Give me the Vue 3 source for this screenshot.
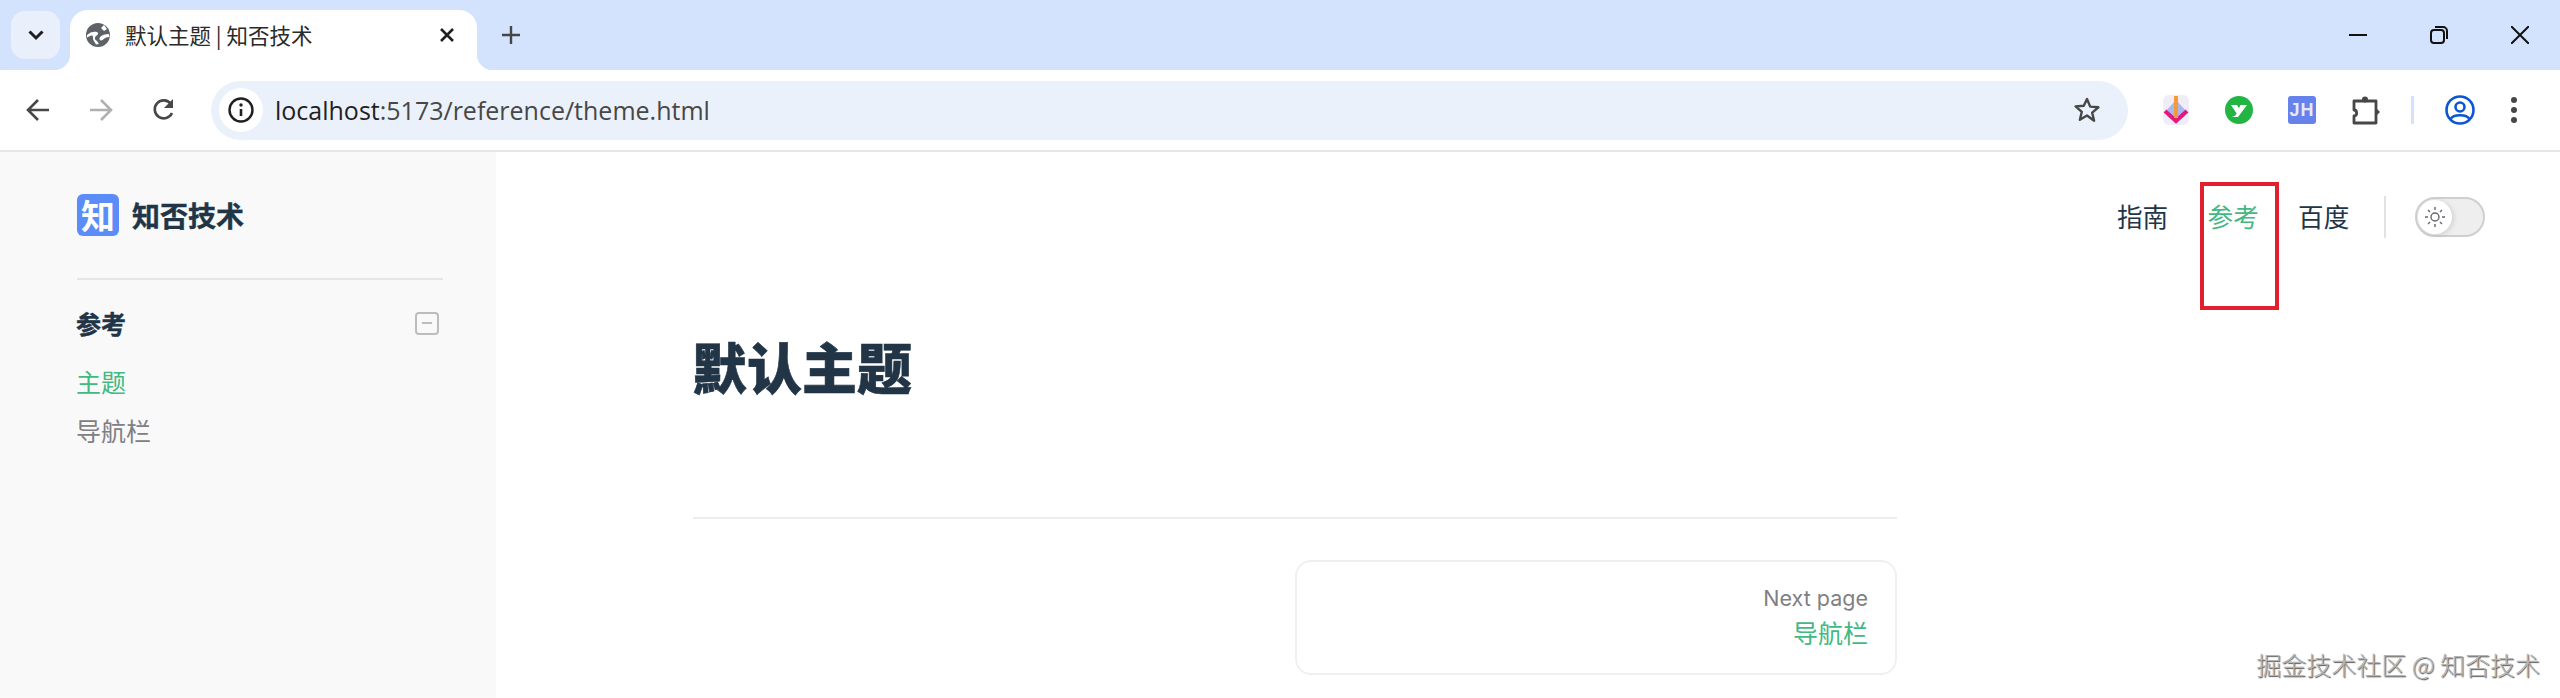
<template>
  <div class="ventana">
    <!-- barra de pestañas -->
    <div class="tabstrip">
      <button class="tab-search">
        <svg width="20" height="20" viewBox="0 0 20 20"><path d="M3.5 6.5 10 13l6.5-6.5" fill="none" stroke="#1f1f1f" stroke-width="3" /></svg>
      </button>
      <div class="tab">
        <svg class="tab-globe" width="24" height="24" viewBox="0 0 24 24">
          <circle cx="12" cy="12" r="12" fill="#5f6368" />
          <path d="M1 12c3-3 7-4 10-3 2 1 1 3-1 4-2 2-1 4 1 5l2 3-3 .5c-1-2-3-4-3-6 0-2 0-3-1-3-2 0-3 1-5 2z" fill="#fff" />
          <path d="M14 14c2-2 5-3 9-3l.5 3c-3 0-5 1-7 3-2 1-4 0-2.500-3z" fill="#fff" />
          <path d="M15 5l3-3 3 4-3 2z" fill="#fff" />
        </svg>
        <span class="tab-title">默认主题 | 知否技术</span>
        <svg class="tab-x" width="16" height="16" viewBox="0 0 16 16"><path d="M2 2l12 12M14 2 2 14" stroke="#1f1f1f" stroke-width="2.6" /></svg>
      </div>
      <svg class="tab-new" width="20" height="20" viewBox="0 0 20 20"><path d="M10 1v18M1 10h18" stroke="#444746" stroke-width="2.4" /></svg>
      <div class="win-controls">
        <svg width="18" height="18" viewBox="0 0 18 18"><path d="M0 9h18" stroke="#111" stroke-width="2" /></svg>
        <svg width="18" height="18" viewBox="0 0 18 18"><rect x="1" y="4" width="13" height="13" rx="3" fill="none" stroke="#111" stroke-width="2" /><path d="M5 1h8a4 4 0 0 1 4 4v8" fill="none" stroke="#111" stroke-width="2" /></svg>
        <svg width="18" height="18" viewBox="0 0 18 18"><path d="M0 0l18 18M18 0 0 18" stroke="#111" stroke-width="2" /></svg>
      </div>
    </div>

    <!-- barra de direcciones -->
    <div class="toolbar">
      <div class="nav-btns">
        <svg width="24" height="24" viewBox="0 0 24 24"><path d="M23 12H3M12 2 2 12l10 10" fill="none" stroke="#474747" stroke-width="2.6" /></svg>
        <svg width="24" height="24" viewBox="0 0 24 24"><path d="M1 12h20M12 2l10 10-10 10" fill="none" stroke="#b0b0b0" stroke-width="2.6" /></svg>
        <svg width="24" height="24" viewBox="0 0 24 24"><path d="M20 15a9 9 0 1 1-1-9" fill="none" stroke="#474747" stroke-width="2.6" /><path d="M21 1v9h-9z" fill="#474747" /></svg>
      </div>
      <div class="omnibox">
        <span class="info">
          <svg width="26" height="26" viewBox="0 0 26 26"><circle cx="13" cy="13" r="11.5" fill="none" stroke="#1f1f1f" stroke-width="2.4" /><path d="M13 12v7" stroke="#1f1f1f" stroke-width="2.6" /><circle cx="13" cy="8" r="1.7" fill="#1f1f1f" /></svg>
        </span>
        <span class="url"><b>localhost</b>:5173/reference/theme.html</span>
        <svg class="star" width="28" height="28" viewBox="0 0 28 28"><path d="M14 3l3.2 7.6 8.2.7-6.2 5.4 1.9 8L14 19.500l-7.100 4.300 1.900-8-6.200-5.400 8.200-.7z" fill="none" stroke="#474747" stroke-width="2.400" stroke-linejoin="round" /></svg>
      </div>
      <div class="extensiones">
        <svg width="28" height="32" viewBox="0 0 28 32">
          <rect x="1" y="1" width="26" height="30" rx="6" fill="#f0edf6" />
          <path d="M14 6 25 18 14 29 3 18z" fill="#a9b7f0" />
          <path d="M3 17l11 10 11-10" fill="none" stroke="#e5177f" stroke-width="4" />
          <path d="M14 2v22" stroke="#f39a3a" stroke-width="4" />
        </svg>
        <svg width="28" height="28" viewBox="0 0 28 28">
          <circle cx="14" cy="14" r="14" fill="#22b544" />
          <path d="M6 9h6l3 5-3 4zM15.500 9H22l-9 12H7l3.500-1.500z" fill="#fff" />
        </svg>
        <span class="ext-jh">JH</span>
        <svg width="30" height="30" viewBox="0 0 30 30">
          <path d="M3 6h22v22H3v-7c3.500 0 3.500-6 0-6z" fill="none" stroke="#474747" stroke-width="2.800" stroke-linejoin="round" />
          <circle cx="14" cy="4.500" r="3" fill="#474747" />
          <path d="M25 13l4 4-4 4z" fill="#474747" />
        </svg>
        <span class="ext-sep"></span>
        <svg width="30" height="30" viewBox="0 0 30 30">
          <circle cx="15" cy="15" r="13.500" fill="none" stroke="#0b57d0" stroke-width="2.600" />
          <circle cx="15" cy="12" r="4.500" fill="none" stroke="#0b57d0" stroke-width="2.600" />
          <path d="M5.500 24c3-5 16-5 19 0" fill="none" stroke="#0b57d0" stroke-width="2.600" />
        </svg>
        <svg width="8" height="28" viewBox="0 0 8 28"><circle cx="4" cy="4" r="3" fill="#474747" /><circle cx="4" cy="14" r="3" fill="#474747" /><circle cx="4" cy="24" r="3" fill="#474747" /></svg>
      </div>
    </div>

    <!-- página -->
    <div class="pagina">
      <aside class="sidebar">
        <div class="logo">
          <span class="logo-icono">知</span>
          <span class="logo-texto">知否技术</span>
        </div>
        <div class="seccion">
          <h2>参考</h2>
          <span class="colapsar"></span>
        </div>
        <a v-for="item in sidebarItems" :key="item.nombre" class="side-link" :class="{ activo: item.activo }">{{ item.nombre }}</a>
      </aside>

      <main class="contenido">
        <nav class="topnav">
          <a v-for="item in navItems" :key="item.nombre" class="nav-link" :class="{ activo: item.activo }">
            {{ item.nombre }}
            <span v-if="item.activo" class="marca"></span>
          </a>
          <span class="nav-sep"></span>
          <span class="switch">
            <span class="knob">
              <svg width="20" height="20" viewBox="0 0 20 20">
                <circle cx="10" cy="10" r="4" fill="none" stroke="#67676c" stroke-width="1.400" />
                <path d="M10 0v3M10 17v3M0 10h3M17 10h3M3 3l2 2M15 15l2 2M3 17l2-2M15 5l2-2" stroke="#67676c" stroke-width="1.400" />
              </svg>
            </span>
          </span>
        </nav>
        <div class="doc">
          <h1>默认主题</h1>
          <div class="doc-footer">
            <a class="next">
              <span class="next-label">Next page</span>
              <span class="next-title">导航栏</span>
            </a>
          </div>
        </div>
      </main>

      <span class="watermark">掘金技术社区 @ 知否技术</span>
    </div>
  </div>
</template>

<script setup>
const sidebarItems = [
  { nombre: "主题", activo: true },
  { nombre: "导航栏", activo: false },
];

const navItems = [
  { nombre: "指南", activo: false },
  { nombre: "参考", activo: true },
  { nombre: "百度", activo: false },
];
</script>

<style>
html,
body {
  margin: 0;
  background: #fff;
}
</style>

<style scoped>
.ventana {
  width: 2560px;
  height: 698px;
  overflow: hidden;
  display: flex;
  flex-direction: column;
  font-family: "Noto Sans CJK SC", "Noto Sans", sans-serif;
  color: #213547;
}

/* Pestañas */
.tabstrip {
  height: 70px;
  flex: none;
  background: #d3e3fd;
  display: flex;
  align-items: flex-start;
}

.tab-search {
  width: 49px;
  height: 48px;
  margin: 11px 0 0 11px;
  border: none;
  padding: 0;
  border-radius: 14px;
  background: #e9f0fc;
  display: flex;
  align-items: center;
  justify-content: center;
}

.tab {
  position: relative;
  width: 407px;
  height: 60px;
  margin: 10px 0 0 10px;
  background: #fff;
  border-radius: 18px 18px 0 0;
  display: flex;
  align-items: center;
  padding: 0 22px 10px 16px;
  box-sizing: border-box;
}

.tab::before,
.tab::after {
  content: "";
  position: absolute;
  bottom: 0;
  width: 16px;
  height: 16px;
}

.tab::before {
  left: -16px;
  background: radial-gradient(circle at 0 0, transparent 16px, #fff 16.500px);
}

.tab::after {
  right: -16px;
  background: radial-gradient(circle at 100% 0, transparent 16px, #fff 16.500px);
}

.tab-globe {
  flex: none;
}

.tab-title {
  margin-left: 15px;
  font-size: 21.500px;
  line-height: 30px;
  color: #2a2a2a;
  flex: 1;
  white-space: nowrap;
}

.tab-new {
  margin: 25px 0 0 24px;
}

.win-controls {
  margin: 26px 31px 0 auto;
  display: flex;
  gap: 63px;
}

/* Barra de direcciones */
.toolbar {
  height: 80px;
  flex: none;
  background: #fff;
  border-radius: 14px 14px 0 0;
  border-bottom: 2px solid #e6e6e6;
  display: flex;
  align-items: center;
  position: relative;
}

.nav-btns {
  display: flex;
  gap: 39px;
  margin-left: 26px;
  flex: none;
}

.omnibox {
  width: 1917px;
  height: 59px;
  margin-left: 35px;
  flex: none;
  box-sizing: border-box;
  border-radius: 30px;
  background: #ebf1fa;
  display: flex;
  align-items: center;
  padding: 0 27px 0 8px;
}

.info {
  width: 44px;
  height: 44px;
  border-radius: 50%;
  background: #fff;
  display: flex;
  align-items: center;
  justify-content: center;
  flex: none;
}

.url {
  margin-left: 12px;
  flex: 1;
  font-family: "Open Sans", "Noto Sans", sans-serif;
  font-size: 25px;
  color: #474747;
  white-space: nowrap;
}

.url b {
  font-weight: 400;
  color: #1f1f1f;
}

.star {
  flex: none;
}

.extensiones {
  flex: none;
  margin-left: 34px;
  display: flex;
  align-items: center;
  gap: 35px;
}

.ext-jh {
  width: 28px;
  height: 28px;
  border-radius: 3px;
  background: #6583ea;
  color: #e6e9f8;
  font: 700 18px/28px "Liberation Sans", sans-serif;
  letter-spacing: 1px;
  text-align: center;
}

.ext-sep {
  width: 3px;
  height: 28px;
  background: #d3e3fd;
  margin: 0 -4px 0 -5px;
}

/* Página */
.pagina {
  flex: 1;
  min-height: 0;
  display: flex;
  position: relative;
}

.sidebar {
  width: 496px;
  flex: none;
  box-sizing: border-box;
  padding: 42px 53px 0 77px;
  background: #f9f9f9;
  display: flex;
  flex-direction: column;
}

.logo {
  display: flex;
  align-items: center;
  gap: 13px;
  padding-bottom: 42px;
  border-bottom: 2px solid #e6e6e7;
}

.logo-icono {
  width: 42px;
  height: 42px;
  border-radius: 6px;
  background: #5b8cf8;
  color: #fff;
  font-size: 34px;
  font-weight: 700;
  line-height: 42px;
  text-align: center;
}

.logo-texto {
  font-size: 28px;
  font-weight: 700;
  line-height: 42px;
  -webkit-text-stroke: 0.4px #213547;
}

.seccion {
  display: flex;
  align-items: center;
  justify-content: space-between;
  margin-top: 25px;
  height: 36px;
}

.seccion h2 {
  margin: 0 0 0 -1px;
  font-size: 25px;
  font-weight: 700;
  line-height: 36px;
  -webkit-text-stroke: 0.4px #213547;
}

.colapsar {
  width: 24px;
  height: 23px;
  box-sizing: border-box;
  margin-right: 4px;
  border: 2px solid #bdbdbd;
  border-radius: 4px;
  display: flex;
  align-items: center;
  justify-content: center;
}

.colapsar::after {
  content: "";
  width: 10px;
  height: 2px;
  background: #bdbdbd;
}

.side-link {
  display: block;
  margin-left: -1px;
  font-size: 25px;
  line-height: 49px;
  color: #808084;
}

.seccion + .side-link {
  margin-top: 15.500px;
}

.side-link.activo {
  color: #42b883;
}

.contenido {
  flex: 1;
  min-width: 0;
  display: flex;
  flex-direction: column;
}

.topnav {
  display: flex;
  align-items: center;
  justify-content: flex-end;
  height: 44px;
  margin-top: 43px;
  padding-right: 75px;
}

.nav-link {
  position: relative;
  padding: 0 19.700px 2px;
  font-size: 25.600px;
  line-height: 42px;
  color: #213547;
}

.nav-link.activo {
  color: #42b883;
}

/* Recuadro rojo de la captura */
.marca {
  position: absolute;
  left: 12px;
  top: -13px;
  width: 79px;
  height: 128px;
  box-sizing: border-box;
  border: 4px solid #e0202e;
}

.nav-sep {
  width: 2px;
  height: 42px;
  background: #e2e2e3;
  margin: 0 29px 0 15px;
}

.switch {
  width: 70px;
  height: 40px;
  box-sizing: border-box;
  border: 2px solid #cfcfd1;
  border-radius: 20px;
  background: #eeeeef;
  display: flex;
  align-items: center;
  padding-left: 1px;
}

.knob {
  width: 34px;
  height: 34px;
  border-radius: 50%;
  background: #fff;
  box-shadow: 2px 1px 5px rgba(0, 0, 0, 0.12);
  display: flex;
  align-items: center;
  justify-content: center;
}

.doc {
  width: 1204px;
  margin: 0 0 0 197px;
}

.doc h1 {
  margin: 0 0 0 -1px;
  padding-top: 86px;
  font-size: 55px;
  font-weight: 900;
  line-height: 80px;
  color: #213547;
  -webkit-text-stroke: 0.6px #213547;
}

.doc-footer {
  margin-top: 112px;
  padding-top: 41px;
  border-top: 2px solid #ececed;
  display: flex;
  justify-content: flex-end;
}

.next {
  width: 602px;
  height: 115px;
  box-sizing: border-box;
  border: 2px solid #f0f0f1;
  border-radius: 16px;
  padding: 18px 27px 0 0;
  display: flex;
  flex-direction: column;
  align-items: flex-end;
}

.next-label {
  font-family: "Inter", "Noto Sans", sans-serif;
  font-size: 21.500px;
  line-height: 36px;
  color: #808084;
}

.next-title {
  font-size: 25px;
  line-height: 32px;
  color: #42b883;
}

.watermark {
  position: absolute;
  right: 20px;
  bottom: 17px;
  font-size: 25px;
  font-weight: 300;
  line-height: 34px;
  color: #b4b4b4;
  text-shadow: 1px 1px 1px #555;
  white-space: nowrap;
}
</style>
